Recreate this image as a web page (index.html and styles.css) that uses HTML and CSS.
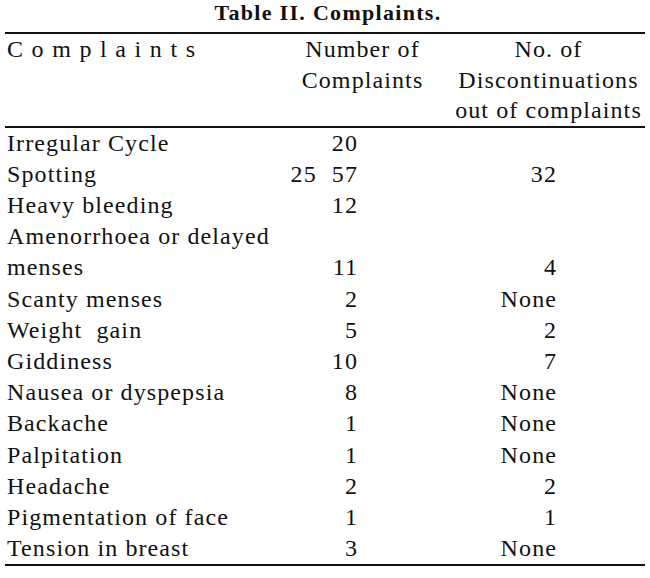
FILE: index.html
```html
<!DOCTYPE html>
<html>
<head>
<meta charset="utf-8">
<link rel="stylesheet" href="styles.css">
</head>
<body>
<div class="page">
  <h1 class="title">Table II. Complaints.</h1>
  <table class="complaints">
    <colgroup>
      <col class="w1">
      <col class="w2">
      <col class="w3">
    </colgroup>
    <thead>
      <tr>
        <th class="c1"><span class="spaced">Complaints</span></th>
        <th class="c2"><span class="ln">Number of</span><span class="ln">Complaints</span></th>
        <th class="c3"><span class="ln">No. of</span><span class="ln">Discontinuations</span><span class="ln">out of complaints</span></th>
      </tr>
    </thead>
    <tbody>
      <tr><td class="c1">Irregular Cycle</td><td class="c2">20</td><td class="c3"></td></tr>
      <tr><td class="c1">Spotting</td><td class="c2"><span class="sub">25</span>57</td><td class="c3">32</td></tr>
      <tr><td class="c1">Heavy bleeding</td><td class="c2">12</td><td class="c3"></td></tr>
      <tr><td class="c1">Amenorrhoea or delayed</td><td class="c2"></td><td class="c3"></td></tr>
      <tr><td class="c1">menses</td><td class="c2">11</td><td class="c3">4</td></tr>
      <tr><td class="c1">Scanty menses</td><td class="c2">2</td><td class="c3">None</td></tr>
      <tr><td class="c1">Weight&nbsp; gain</td><td class="c2">5</td><td class="c3">2</td></tr>
      <tr><td class="c1">Giddiness</td><td class="c2">10</td><td class="c3">7</td></tr>
      <tr><td class="c1">Nausea or dyspepsia</td><td class="c2">8</td><td class="c3">None</td></tr>
      <tr><td class="c1">Backache</td><td class="c2">1</td><td class="c3">None</td></tr>
      <tr><td class="c1">Palpitation</td><td class="c2">1</td><td class="c3">None</td></tr>
      <tr><td class="c1">Headache</td><td class="c2">2</td><td class="c3">2</td></tr>
      <tr><td class="c1">Pigmentation of face</td><td class="c2">1</td><td class="c3">1</td></tr>
      <tr><td class="c1">Tension in breast</td><td class="c2">3</td><td class="c3">None</td></tr>
    </tbody>
  </table>
</div>
</body>
</html>
```

FILE: styles.css
```css
html, body {
  margin: 0;
  padding: 0;
  background: #ffffff;
}
.page {
  width: 650px;
  padding: 0 5px;
  box-sizing: border-box;
  font-family: "Liberation Serif", "Times New Roman", serif;
  color: #111111;
}
.title {
  margin: 0;
  height: 32px;
  font-size: 22px;
  line-height: 25px;
  letter-spacing: 1.3px;
  font-weight: bold;
  text-align: center;
  padding-left: 6px;
}
.complaints {
  width: 640px;
  border-collapse: collapse;
  table-layout: fixed;
  font-size: 24px;
  letter-spacing: 1.1px;
}
.w1 { width: 270px; }
.w2 { width: 165px; }
.w3 { width: 205px; }
.complaints th {
  font-weight: normal;
  line-height: 30.5px;
  padding: 0;
  border-top: 2px solid #111;
  border-bottom: 2px solid #111;
  vertical-align: top;
  white-space: nowrap;
}
.complaints td {
  padding: 0;
  line-height: 31.2px;
  white-space: nowrap;
}
.complaints tbody tr:last-child td {
  border-bottom: 2px solid #111;
}
td.c1 {
  text-align: left;
  padding-left: 2px;
}
td.c2 {
  text-align: right;
  padding-right: 82px;
}
td.c3 {
  text-align: right;
  padding-right: 88px;
}
th.c1 {
  text-align: left;
  padding-left: 2px;
}
.spaced {
  letter-spacing: 8.6px;
}
th.c2 {
  text-align: center;
  padding-left: 10px;
}
th.c3 {
  text-align: center;
  padding-left: 12px;
}
.ln {
  display: block;
}
.sub {
  margin-right: 15px;
}
```
